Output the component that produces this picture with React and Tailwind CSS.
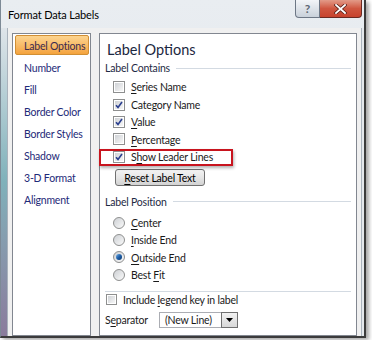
import React from "react";

/* label with an access-key letter underlined */
function Accel({ text, k }) {
  if (k === undefined || k < 0) return <>{text}</>;
  return (
    <>
      {text.slice(0, k)}
      <span className="underline underline-offset-[2px]">{text[k]}</span>
      {text.slice(k + 1)}
    </>
  );
}

function CheckBox({ checked, small }) {
  const size = small ? "w-[11px] h-[11px]" : "w-[12px] h-[12px]";
  return (
    <span className={`${size} shrink-0 border border-[#8e8f8f] bg-white p-[1px] flex`}>
      <span className="flex-1 bg-gradient-to-br from-[#cfd2d6] to-[#f7f7f7] flex items-center justify-center">
        {checked && (
          <svg width="8" height="8" viewBox="0 0 8 8">
            <path d="M1 4.2 L3 6.4 L7 1" fill="none" stroke="#2b3f8f" strokeWidth="1.6" />
          </svg>
        )}
      </span>
    </span>
  );
}

function Radio({ checked }) {
  return (
    <span className="w-[12px] h-[12px] shrink-0 rounded-full border border-[#8e8f8f] bg-gradient-to-br from-[#cdd0d4] to-[#fafafa] flex items-center justify-center">
      {checked && (
        <span className="w-[6px] h-[6px] rounded-full bg-gradient-to-br from-[#6fb0e8] via-[#1f5fa8] to-[#0d3a70]" />
      )}
    </span>
  );
}

function SectionHeader({ title }) {
  return (
    <div className="h-[14px] flex items-center pr-[5px] text-[#1e2a44]">
      <span className="pt-[1px]">{title}</span>
      <span className="flex-1 ml-[6px] h-px bg-[#d3dae2]" />
    </div>
  );
}

function CheckRow({ label, k, checked }) {
  return (
    <div className="h-[17.4px] flex items-center gap-[6px] ml-[8px]">
      <CheckBox checked={checked} />
      <span className="pt-[1px]">
        <Accel text={label} k={k} />
      </span>
    </div>
  );
}

function RadioRow({ label, k, checked }) {
  return (
    <div className="h-[17.4px] flex items-center gap-[6px] ml-[8px]">
      <Radio checked={checked} />
      <span className="pt-[1px]">
        <Accel text={label} k={k} />
      </span>
    </div>
  );
}

const menu = [
  "Label Options",
  "Number",
  "Fill",
  "Border Color",
  "Border Styles",
  "Shadow",
  "3-D Format",
  "Alignment",
];

export default function App() {
  return (
    <div className="w-[372px] h-[340px] bg-white font-['Lato',sans-serif] text-[10.5px] tracking-[-0.2px] text-[#1a1a1a] leading-none whitespace-nowrap">
      <div className="w-[366px] h-[338px] flex flex-col bg-gradient-to-b from-[#e9edf1] to-[#dde4ea] border-l border-l-[#7d8a96] border-r-2 border-b-2 border-[#3b3b3b] shadow-[3px_2px_4px_rgba(0,0,0,0.35)] overflow-hidden">
        {/* title bar */}
        <div className="h-[28px] flex items-start justify-between shrink-0">
          <div className="h-[28px] flex items-center pl-[7px] text-[11px] tracking-[-0.15px] text-black">
            Format Data Labels
          </div>
          <div className="flex mr-[2px]">
            <div className="w-[25px] h-[18px] border border-t-0 border-[#6d7785] rounded-bl-[4px] bg-gradient-to-b from-[#f3f5f8] to-[#c9d1da] flex items-center justify-center text-[12px] font-bold text-[#5d6774]">
              ?
            </div>
            <div className="w-[42px] h-[18px] border border-t-0 border-l-0 border-[#6b2a22] rounded-br-[4px] bg-gradient-to-b from-[#e29a88] via-[#cf5640] to-[#c7432e] flex items-center justify-center">
              <svg width="13" height="10" viewBox="0 0 13 10">
                <path d="M2 1 L11 9 M11 1 L2 9" stroke="#5a2018" strokeWidth="3.4" strokeLinecap="square" />
                <path d="M2 1 L11 9 M11 1 L2 9" stroke="#ffffff" strokeWidth="1.8" strokeLinecap="square" />
              </svg>
            </div>
          </div>
        </div>

        {/* body */}
        <div className="flex flex-1 min-h-0">
          <div className="w-[6px] bg-gradient-to-b from-[#dfe5ea] via-[#7fb1ba] to-[#8a7b9c]" />
          <div className="flex-1 bg-[#f0f0f0] border-x border-[#a9b2bc] flex gap-[8px] pl-[4px] pr-[4px] pt-[5px]">
            {/* left list */}
            <div className="w-[79px] bg-white border border-[#828790] flex flex-col text-[#1e2a78]">
              {menu.map((item, i) => (
                <div key={item} className="h-[22px] py-[1px] pl-[2px] pr-[1px]">
                  <div
                    className={
                      i === 0
                        ? "h-full flex items-center pl-[8px] pt-[3px] border border-[#d18f34] rounded-[2px] bg-gradient-to-b from-[#fcd48f] to-[#f4a33c] text-[#3a2a50]"
                        : "h-full flex items-center pl-[8px] pt-[3px] border border-transparent"
                    }
                  >
                    {item}
                  </div>
                </div>
              ))}
            </div>

            {/* right panel */}
            <div className="w-[258px] bg-white border border-[#828790] border-b flex flex-col pl-[5px]">
              <div className="h-[24px] mt-[3px] ml-[2px] pt-[3px] flex items-center text-[14.5px] tracking-normal text-[#1b2740]">
                Label Options
              </div>
              <SectionHeader title="Label Contains" />
              <div className="mt-[3.5px]">
                <CheckRow label="Series Name" k={0} />
                <CheckRow label="Category Name" k={-1} checked />
                <CheckRow label="Value" k={0} checked />
                <CheckRow label="Percentage" k={0} />
                <div className="relative">
                  <CheckRow label="Show Leader Lines" k={1} checked />
                  <div className="absolute left-[-6px] top-[1px] w-[134px] h-[17px] border-2 border-[#c8141e] shadow-[1px_2px_3px_rgba(0,0,0,0.3)]" />
                </div>
              </div>
              <div className="mt-[3.5px] ml-[10px] w-[90px] h-[17px] pt-[1px] border border-[#707070] rounded-[3px] bg-gradient-to-b from-[#f3f3f3] via-[#e6e6e6] to-[#d2d2d2] flex items-center justify-center text-black">
                <span>
                  <Accel text="Reset Label Text" k={0} />
                </span>
              </div>
              <div className="mt-[9px]">
                <SectionHeader title="Label Position" />
              </div>
              <div className="mt-[5px]">
                <RadioRow label="Center" k={0} />
                <RadioRow label="Inside End" k={0} />
                <RadioRow label="Outside End" k={0} checked />
                <RadioRow label="Best Fit" k={5} />
              </div>
              <div className="mt-[7px] mr-[5px] h-px bg-[#d3dae2]" />
              <div className="mt-[1px] h-[14px] flex items-center gap-[6px] ml-[1px]">
                <CheckBox small />
                <span className="pt-[1px]">
                  Include <Accel text="legend key in label" k={0} />
                </span>
              </div>
              <div className="mt-[5px] h-[17px] flex items-center">
                <span className="w-[54px] pt-[1px]">
                  <Accel text="Separator" k={1} />
                </span>
                <div className="w-[79px] h-[16px] border border-[#abadb3] bg-white flex items-center">
                  <span className="flex-1 pl-[5px] pt-[1px]">(New Line)</span>
                  <span className="w-[17px] h-[16px] -mr-px border border-[#707070] bg-gradient-to-b from-[#f2f2f2] to-[#d8d8d8] flex items-center justify-center">
                    <svg width="7" height="4" viewBox="0 0 7 4">
                      <path d="M0 0 L7 0 L3.5 4 Z" fill="#000" />
                    </svg>
                  </span>
                </div>
              </div>
            </div>
          </div>
          <div className="w-[2px] bg-[#e4e8ec]" />
        </div>
      </div>
    </div>
  );
}
